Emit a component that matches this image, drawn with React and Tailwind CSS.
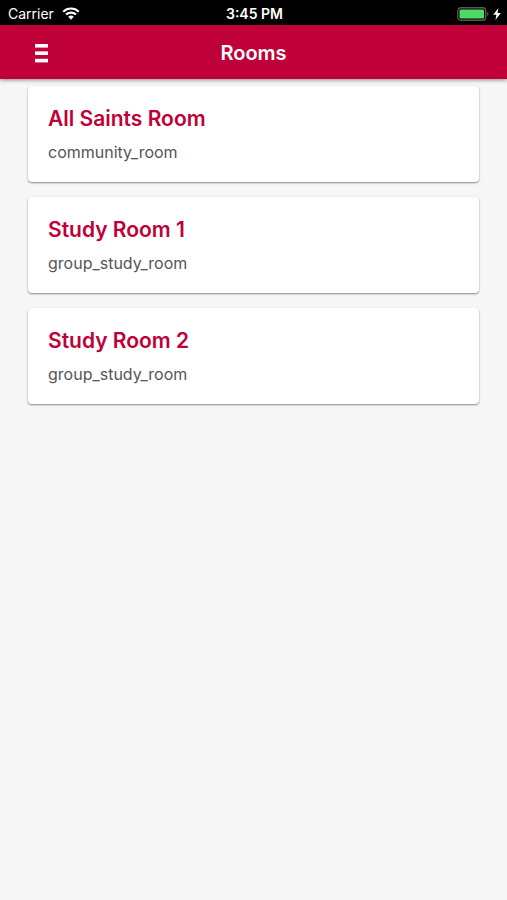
import React from 'react';

const rooms = [
  { id: 1, name: 'All Saints Room', type: 'community_room' },
  { id: 2, name: 'Study Room 1', type: 'group_study_room' },
  { id: 3, name: 'Study Room 2', type: 'group_study_room' },
];

const WifiIcon = () => (
  <svg className="w-[18px] h-[13px]" viewBox="0 0 18 13" fill="none" aria-hidden="true">
    <path d="M1.2 4.7a11.2 11.2 0 0 1 15.6 0" stroke="white" strokeWidth="2.1" />
    <path d="M4 7.6a7.2 7.2 0 0 1 10 0" stroke="white" strokeWidth="2.1" />
    <path d="M9 12.7 6.2 9.8a4 4 0 0 1 5.6 0z" fill="white" />
  </svg>
);

const BatteryIcon = () => (
  <svg className="w-[32px] h-[14px]" viewBox="0 0 32 14" fill="none" aria-hidden="true">
    <rect x="0.75" y="0.75" width="28" height="12.5" rx="3" stroke="#5a5a5c" strokeWidth="1.3" />
    <rect x="2.5" y="2.5" width="24.5" height="9" rx="1.2" fill="#4cd964" />
    <path d="M30.2 4.8c1.7.6 1.7 3.8 0 4.4z" fill="#5a5a5c" />
  </svg>
);

const BoltIcon = () => (
  <svg className="w-[8px] h-[12px]" viewBox="0 0 8 12" fill="white" aria-hidden="true">
    <path d="M5.4 0 0.2 6.8h3.2L2.4 12 7.8 5H4.5z" />
  </svg>
);

const MenuIcon = () => (
  <svg className="w-[13px] h-[19px]" viewBox="0 0 13 19" fill="white" aria-hidden="true">
    <rect y="0" width="13" height="3.6" />
    <rect y="7.4" width="13" height="3.6" />
    <rect y="14.8" width="13" height="3.6" />
  </svg>
);

const StatusBar = () => (
  <div className="grid grid-cols-3 items-center h-[25px] pt-0.5 pl-2 pr-1.5 bg-black text-white text-[14px] leading-5">
    <div className="flex items-center gap-2">
      <span>Carrier</span>
      <WifiIcon />
    </div>
    <span className="text-center font-semibold">3:45 PM</span>
    <div className="flex items-center justify-end gap-1">
      <BatteryIcon />
      <BoltIcon />
    </div>
  </div>
);

const Header = () => (
  <header className="grid grid-cols-[1fr_auto_1fr] items-center h-[54px] pt-0.5 px-7 bg-[#c00038] text-white shadow-[0_1px_4px_rgba(0,0,0,0.45)]">
    <button type="button" aria-label="Open menu" className="flex w-[27px] h-[27px] items-center justify-center">
      <MenuIcon />
    </button>
    <h1 className="text-[20px] leading-6 font-semibold">Rooms</h1>
  </header>
);

const RoomCard = ({ room }) => (
  <li className="h-24 px-5 pt-[18px] bg-white rounded-[4px] shadow-[0_1px_2px_rgba(0,0,0,0.45)]">
    <h2 className="text-[21px] leading-[30px] font-semibold text-[#c00038]">{room.name}</h2>
    <p className="mt-1.5 text-[16px] leading-6 text-[#555555]">{room.type}</p>
  </li>
);

const App = () => {
  return (
    <div className="min-h-screen bg-[#f6f6f6] font-['Inter',sans-serif]">
      <StatusBar />
      <Header />
      <main className="pt-[7px] px-7">
        <ul className="flex flex-col gap-[15px]">
          {rooms.map((room) => (
            <RoomCard key={room.id} room={room} />
          ))}
        </ul>
      </main>
    </div>
  );
};

export default App;
